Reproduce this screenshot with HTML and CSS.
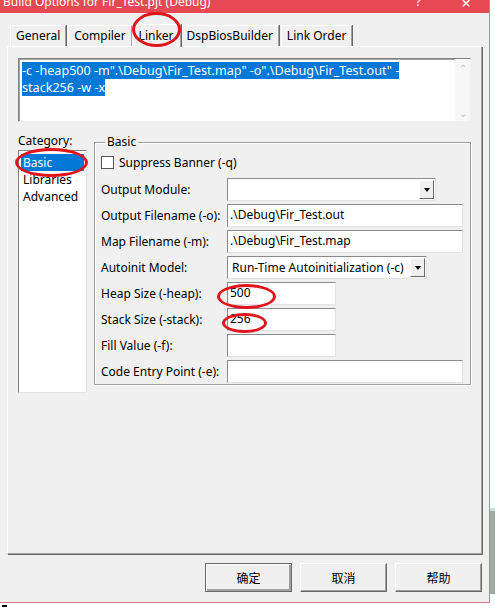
FILE: index.html
```html
<!DOCTYPE html>
<html lang="en">
<head>
    <meta charset="UTF-8">
    <title>Build Options for Fir_Test.pjt (Debug)</title>
    <link rel="stylesheet" href="styles.css">
</head>
<body>
    <div class="window">
        <div class="titlebar">
            <span class="title">Build Options for Fir_Test.pjt (Debug)</span>
            <span class="tb-btn help">?</span>
            <span class="tb-btn close">×</span>
        </div>

        <ul class="tabs">
            <li class="tab">General</li>
            <li class="tab">Compiler</li>
            <li class="tab active">Linker</li>
            <li class="tab">DspBiosBuilder</li>
            <li class="tab">Link Order</li>
        </ul>

        <div class="panel">
            <div class="cmdline">
                <div class="cmdtext"><span class="sel">-c -heap500 -m".\Debug\Fir_Test.map" -o".\Debug\Fir_Test.out" -</span><br><span class="sel">stack256 -w -x</span></div>
                <div class="vscroll">
                    <span class="arr">&#8963;</span>
                    <span class="arr">&#8964;</span>
                </div>
            </div>

            <div class="content">
                <div class="category">
                    <div class="cat-label">Category:</div>
                    <ul class="cat-list">
                        <li><span class="cur">Basic</span></li>
                        <li>Libraries</li>
                        <li>Advanced</li>
                    </ul>
                </div>

                <fieldset class="group">
                    <legend>Basic</legend>
                    <label class="check"><span class="box"></span>Suppress Banner (-q)</label>
                    <div class="fields">
                        <span class="lbl">Output Module:</span>
                        <div class="combo w-module"><span class="val"></span><span class="drop"></span></div>

                        <span class="lbl">Output Filename (-o):</span>
                        <div class="edit w-full">.\Debug\Fir_Test.out</div>

                        <span class="lbl">Map Filename (-m):</span>
                        <div class="edit w-full">.\Debug\Fir_Test.map</div>

                        <span class="lbl">Autoinit Model:</span>
                        <div class="combo w-auto"><span class="val">Run-Time Autoinitialization (-c)</span><span class="drop"></span></div>

                        <span class="lbl">Heap Size (-heap):</span>
                        <div class="edit w-small">500</div>

                        <span class="lbl">Stack Size (-stack):</span>
                        <div class="edit w-small">256</div>

                        <span class="lbl">Fill Value (-f):</span>
                        <div class="edit w-small"></div>

                        <span class="lbl">Code Entry Point (-e):</span>
                        <div class="edit w-full"></div>
                    </div>
                </fieldset>
            </div>
        </div>

        <div class="buttons">
            <button class="btn default">确定</button>
            <button class="btn">取消</button>
            <button class="btn">帮助</button>
        </div>

        <!-- 红色标注圈 -->
        <span class="mark m-linker"></span>
        <span class="mark m-basic"></span>
        <span class="mark m-heap"></span>
        <span class="mark m-stack"></span>
    </div>

    <div class="strip">
        <div class="strip-block"></div>
    </div>
    <div class="dash"></div>
</body>
</html>
```

FILE: styles.css
```css
* {
    margin: 0;
    padding: 0;
    list-style: none;
    box-sizing: border-box;
}

body {
    background: #fff;
    display: flex;
    flex-wrap: wrap;
    width: 495px;
    font-family: "Noto Sans", "Noto Sans CJK SC", sans-serif;
    font-size: 12px;
    color: #000;
}

.window {
    position: relative;
    width: 490px;
    height: 603px;
    background: #f0f0f0;
    border-right: 1px solid #d5798f;
    border-bottom: 1px solid #d5798f;
    display: flex;
    flex-direction: column;
}

/* 标题栏 */
.titlebar {
    height: 13px;
    background: #e84853;
    color: #fff;
    overflow: hidden;
    display: flex;
    align-items: flex-start;
    padding-left: 3px;
}

.title {
    font-size: 12px;
    line-height: 16px;
    margin-top: -6px;
    flex: 1;
}

.tb-btn {
    font-size: 13px;
    line-height: 16px;
    margin-top: -7px;
}

.help {
    margin-right: 40px;
}

.close {
    font-size: 17px;
    line-height: 16px;
    margin-top: -5px;
    margin-right: 18px;
}

/* 选项卡 */
.tabs {
    display: flex;
    margin-top: 10px;
    padding-left: 10px;
    height: 23px;
    align-items: flex-end;
}

.tab {
    height: 21px;
    line-height: 19px;
    padding: 0 5px 0 5px;
    border: 1px solid #fff;
    border-right: 1px solid #a0a0a0;
    border-bottom: none;
    box-shadow: 1px 0 0 #696969;
    margin-right: 2px;
}

.tab.active {
    height: 23px;
    line-height: 21px;
    padding: 0 6px;
    margin: 0 0 -1px -2px;
    background: #f0f0f0;
    position: relative;
    z-index: 1;
}

.tab.active + .tab {
    margin-left: 0;
}

/* 面板 */
.panel {
    width: 475px;
    height: 508px;
    margin-left: 7px;
    border-top: 1px solid #fff;
    border-left: 1px solid #fff;
    border-right: 1px solid #a0a0a0;
    border-bottom: 1px solid #a0a0a0;
    box-shadow: 1px 1px 0 #696969;
    padding: 11px 10px 0 10px;
}

.cmdline {
    display: flex;
    height: 64px;
    background: #fff;
    border-top: 1px solid #828282;
    border-left: 1px solid #828282;
    border-right: 1px solid #f0f0f0;
    border-bottom: 1px solid #f0f0f0;
    box-shadow: inset 1px 1px 0 #a0a0a0;
}

.cmdtext {
    flex: 1;
    padding: 3px 0 0 3px;
    line-height: 17px;
    font-size: 12.6px;
}

.sel {
    background: #0078d7;
    color: #fff;
}

.vscroll {
    width: 15px;
    background: #f7f7f7;
    display: flex;
    flex-direction: column;
    justify-content: space-between;
    align-items: center;
    color: #c4c4c4;
    font-size: 10px;
    line-height: 14px;
    padding: 2px 0 1px 0;
}

/* 分类与分组 */
.content {
    display: flex;
    margin-top: 9px;
}

.category {
    width: 69px;
    margin-right: 7px;
}

.cat-label {
    line-height: 19px;
}

.cat-list {
    height: 243px;
    background: #fff;
    border-top: 1px solid #828282;
    border-left: 1px solid #828282;
    border-right: 1px solid #e3e3e3;
    border-bottom: 1px solid #e3e3e3;
    padding: 3px 2px;
    line-height: 17px;
}

.cur {
    display: block;
    background: #0078d7;
    color: #fff;
    padding-left: 2px;
}

.cat-list li {
    padding-left: 2px;
}

.cat-list li:first-child {
    padding-left: 0;
}

.group {
    width: 377px;
    height: 250px;
    margin-top: 4px;
    border: 1px solid #a0a0a0;
    box-shadow: 1px 1px 0 #fff, inset 1px 1px 0 #fff;
    padding: 0 7px 0 6px;
}

.group legend {
    margin-left: 4px;
    padding: 0 2px;
    line-height: 14px;
}

.check {
    display: flex;
    align-items: center;
    height: 14px;
    margin-top: 6px;
}

.box {
    width: 13px;
    height: 13px;
    background: #fff;
    border: 1px solid #555;
    margin-right: 5px;
}

.fields {
    display: grid;
    grid-template-columns: 126px 1fr;
    grid-auto-rows: 23px;
    row-gap: 3px;
    margin-top: 9px;
    align-items: center;
}

.lbl {
    white-space: nowrap;
}

.edit,
.combo {
    height: 23px;
    background: #fff;
    border-top: 1px solid #8a8a8a;
    border-left: 1px solid #8a8a8a;
    border-right: 1px solid #e3e3e3;
    border-bottom: 1px solid #e3e3e3;
    line-height: 20px;
    padding-left: 2px;
    white-space: nowrap;
}

.w-full {
    width: 236px;
}

.w-small {
    width: 109px;
}

.w-module {
    width: 209px;
}

.w-auto {
    width: 200px;
}

.combo {
    display: flex;
    padding-right: 1px;
    padding-top: 1px;
    padding-bottom: 1px;
}

.combo .val {
    flex: 1;
    line-height: 19px;
    padding-left: 2px;
    overflow: hidden;
}

.drop {
    width: 15px;
    background: #f0f0f0;
    border-top: 1px solid #fff;
    border-left: 1px solid #fff;
    border-right: 1px solid #696969;
    border-bottom: 1px solid #696969;
    display: flex;
    align-items: center;
    justify-content: center;
}

.drop::after {
    content: "";
    border-left: 3px solid transparent;
    border-right: 3px solid transparent;
    border-top: 4px solid #000;
}

/* 底部按钮 */
.buttons {
    display: flex;
    justify-content: flex-end;
    gap: 8px;
    margin-top: 9px;
    padding-right: 7px;
}

.btn {
    width: 87px;
    height: 29px;
    background: #f0f0f0;
    border-top: 1px solid #fff;
    border-left: 1px solid #fff;
    border-right: 1px solid #696969;
    border-bottom: 1px solid #696969;
    box-shadow: inset -1px -1px 0 #a0a0a0;
    font-family: "Noto Sans CJK SC", sans-serif;
    font-size: 12px;
    color: #000;
}

.btn.default {
    border: 1px solid #696969;
    box-shadow: inset 1px 1px 0 #fff, inset -2px -2px 0 #a0a0a0;
}

/* 标注 */
.mark {
    position: absolute;
    z-index: 2;
    border: 3px solid #e0151c;
    border-radius: 50%;
}

.m-linker {
    left: 132px;
    top: 12px;
    width: 49px;
    height: 35px;
}

.m-basic {
    left: 15px;
    top: 148px;
    width: 73px;
    height: 29px;
}

.m-heap {
    left: 217px;
    top: 284px;
    width: 59px;
    height: 25px;
}

.m-stack {
    left: 222px;
    top: 313px;
    width: 45px;
    height: 20px;
}

/* 右侧背景条 */
.strip {
    width: 5px;
    height: 603px;
    padding-top: 508px;
}

.strip-block {
    height: 86px;
    background: #a6a6a6;
    border-top: 3px solid #d6dce6;
}

.dash {
    width: 5px;
    height: 2px;
    background: #000;
    margin: 2px 0 0 2px;
}
```
